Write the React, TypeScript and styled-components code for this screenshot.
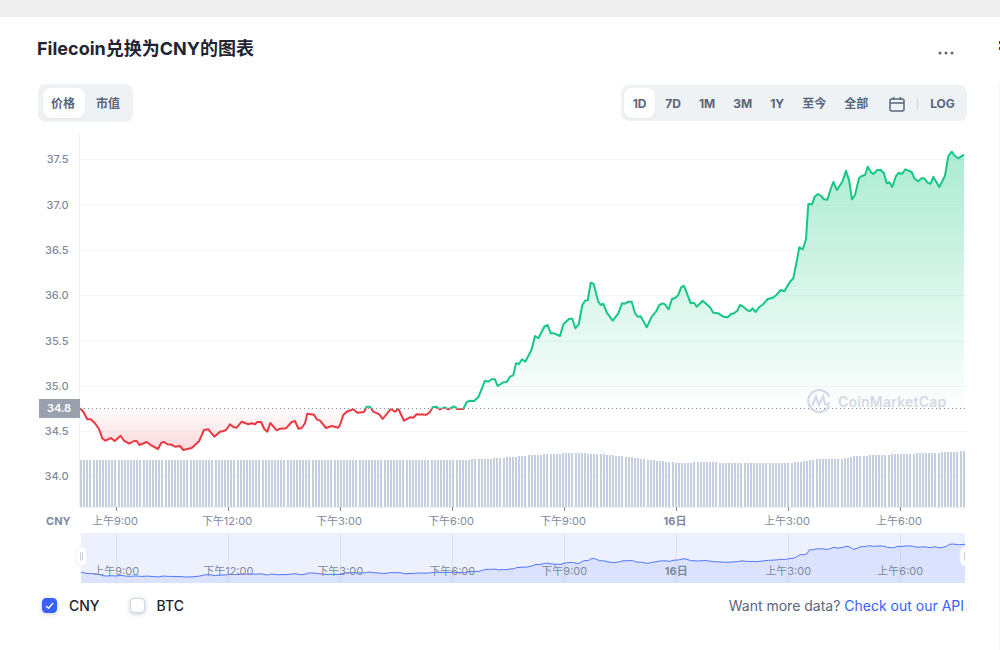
import React from "react";
import styled, { createGlobalStyle } from "styled-components";

const GlobalStyle = createGlobalStyle`
  html, body { margin: 0; padding: 0; background: #fff; }
  body { font-family: Inter, "Noto Sans CJK SC", "Noto Sans", sans-serif; overflow: hidden; }
`;

const Page = styled.div`
  width: 1000px;
  height: 650px;
  display: flex;
  flex-direction: column;
  overflow: hidden;
`;
const TopBand = styled.div`
  height: 17px;
  flex: none;
  background: #eeeeee;
`;
const Body = styled.div`
  flex: 1;
  display: flex;
  min-height: 0;
`;
const Card = styled.section`
  width: 998px;
  flex: none;
  box-sizing: border-box;
  padding: 0 31px 0 38px;
  display: flex;
  flex-direction: column;
`;
const Side = styled.aside`
  flex: 1;
  display: flex;
  flex-direction: column;
  align-items: flex-end;
  padding-top: 24px;
`;
const SideMark = styled.span`
  width: 1.5px;
  height: 3px;
  margin-bottom: 3px;
  background: #6b3a00;
`;
const SideEdge = styled.span`
  width: 1px;
  flex: 1;
  margin-top: 32px;
  background: #f4f4f4;
`;
const Header = styled.header`
  height: 67px;
  flex: none;
  box-sizing: border-box;
  padding: 21px 13px 0 0;
  display: flex;
  justify-content: space-between;
  align-items: flex-start;
`;
const Title = styled.h2`
  margin: 0 0 0 -1px;
  font-size: 18px;
  line-height: 22px;
  font-weight: 700;
  color: #222531;
`;
const More = styled.svg`
  width: 16px;
  height: 4px;
  margin-top: 13px;
  fill: #58667e;
`;
const Controls = styled.div`
  height: 38px;
  flex: none;
  display: flex;
  justify-content: space-between;
  align-items: flex-start;
  margin-bottom: 6px;
`;
const Segment = styled.div`
  display: flex;
  align-items: center;
  gap: ${(p: { $gap: number }) => p.$gap}px;
  background: #eff2f5;
  border-radius: 8px;
`;
const LeftSegment = styled(Segment)`
  height: 38px;
  box-sizing: border-box;
  padding: 0 4px 0 5px;
`;
const RightSegment = styled(Segment)`
  width: 346px;
  height: 36px;
  margin-top: 1px;
  box-sizing: border-box;
  padding: 0 0 0 3px;
`;
const Tab = styled.button<{ $active?: boolean; $left?: number; $right?: number; $top?: number }>`
  height: 30px;
  border: 0;
  margin: 0;
  padding: ${(p) => p.$top ?? 1}px ${(p) => p.$right ?? 8}px 0 ${(p) => p.$left ?? 8}px;
  border-radius: 8px;
  background: ${(p) => (p.$active ? "#fff" : "transparent")};
  box-shadow: ${(p) => (p.$active ? "0 1px 2px rgba(128,138,157,.12)" : "none")};
  color: #58667e;
  font-family: inherit;
  font-size: 12px;
  font-weight: 700;
  line-height: 28px;
`;
const CalendarIcon = styled.svg`
  width: 16px;
  height: 16px;
  margin: 1px 0 0 11px;
  fill: none;
  stroke: #58667e;
  stroke-width: 1.5;
`;
const Divider = styled.span`
  width: 1px;
  height: 14px;
  margin: 1px 10px 0 10px;
  background: #cfd6e4;
`;
const LogLabel = styled.span`
  margin-top: 1px;
  color: #58667e;
  font-size: 12px;
  font-weight: 700;
`;
const ChartSvg = styled.svg`
  width: 929px;
  height: 462px;
  flex: none;
  display: block;
`;
const AxisText = styled.text<{ $bold?: boolean }>`
  font-family: Inter, "Noto Sans CJK SC", sans-serif;
  font-size: 11px;
  font-weight: ${(p) => (p.$bold ? 700 : 400)};
  fill: #808a9d;
`;
const PriceText = styled.text`
  font-family: Inter, sans-serif;
  font-size: 11px;
  font-weight: 500;
  fill: #808a9d;
`;
const BadgeText = styled.text`
  font-family: Inter, sans-serif;
  font-size: 11px;
  font-weight: 600;
  fill: #fff;
`;
const Watermark = styled.text`
  font-family: Inter, sans-serif;
  font-size: 14px;
  font-weight: 600;
  letter-spacing: 0.2px;
  fill: #d3d9e6;
`;
const Footer = styled.footer`
  display: flex;
  align-items: center;
  justify-content: space-between;
  height: 30px;
  padding: 0 3px 0 4px;
  font-size: 14px;
`;
const Legend = styled.div`
  display: flex;
  align-items: center;
  gap: 30px;
`;
const LegendItem = styled.label`
  display: flex;
  align-items: center;
  gap: 12px;
  font-weight: 500;
  color: #222531;
`;
const Check = styled.span<{ $on?: boolean }>`
  width: 15px;
  height: 15px;
  box-sizing: border-box;
  border-radius: 4px;
  display: flex;
  align-items: center;
  justify-content: center;
  background: ${(p) => (p.$on ? "#3861fb" : "#fff")};
  border: 1px solid ${(p) => (p.$on ? "#3861fb" : "#cfd6e4")};
  box-shadow: 0 1px 4px rgba(128, 138, 157, 0.45);
`;
const CheckMark = styled.svg`
  width: 11px;
  height: 11px;
  fill: none;
  stroke: #fff;
  stroke-width: 1.4;
`;
const ApiNote = styled.p`
  margin: 0;
  color: #58667e;
`;
const ApiLink = styled.a`
  color: #3861fb;
  text-decoration: none;
`;

const LINE: [number, number][] = [
  [80,408.3],[83.3,411.7],[87.3,419.3],[90.7,419.3],[95,423.3],[99,429],[102.3,438.3],[105.3,440.7],[111,438],[114.7,441],[120.7,435.7],[124,440.7],[129.3,443.7],[134,441],[136.7,441],[139.3,445],[146.7,442],[151.7,445.7],[158,449],[161.3,442.7],[164,442],[167.3,444.3],[171.3,444.7],[175,446.7],[180,446],[183.3,450],[191.7,448],[199,441.3],[204,430],[208.3,429.3],[214.3,436.7],[220,431.7],[224,431],[226.7,429.3],[230,424.3],[233.3,427],[236.7,427.7],[241.7,421.7],[248.3,424.3],[251.7,423.3],[255,424.3],[257.3,422],[261,422],[264.3,429],[267.3,431.7],[270.3,423],[276.7,430.3],[280,428.7],[286,428.3],[291.7,422],[295,421],[298.3,428.7],[301.7,428],[305,423.3],[307.3,413.7],[314,414.7],[316.7,419.3],[320,420.7],[326,428],[331.7,426],[338.3,427.7],[340,425],[343.3,415],[346.7,411.7],[353.3,409.3],[357.3,412.7],[364,412],[366.7,406.7],[370,406.7],[373.3,411.7],[379.3,414.3],[382.7,419],[390.7,409],[395,411.7],[398.3,408.7],[404,420.7],[410,417.3],[413.3,417.7],[416.7,414.3],[426.7,414.7],[430,411.7],[432.7,407.3],[436,406.7],[440,409.3],[444.7,407.3],[448.3,409.3],[454,406.3],[457.3,409],[463.3,409],[466.7,402],[470,400.7],[474,401],[478.3,397.3],[485,380.7],[488.3,381.7],[491.7,379.3],[495,379.3],[497.7,386],[503.3,382.3],[506.7,382],[510,376.7],[513.3,375.3],[516,363.3],[519,364],[522,359.3],[525.3,361.7],[531.7,349.3],[535,336],[538.3,338.3],[544.3,326.7],[547.7,325],[550.7,333.3],[554,333.3],[560,336],[563.3,324.3],[569.3,318.7],[572.3,318.7],[575.3,328.3],[578.7,324.3],[582.3,305],[585,300.7],[587.7,300.3],[590.7,282.7],[593.7,284],[598.3,301.7],[600.7,305],[603.3,303.7],[606.7,312.3],[612.7,320.7],[618.3,313.3],[622,303.3],[625,303.7],[628.3,301.7],[631.7,301.7],[635,313.3],[637.7,316.7],[640.7,316.3],[646.7,327.3],[651.7,316.7],[656,311.7],[659.3,305],[662.7,303.3],[665,304.3],[668.7,309.3],[672,299],[675.3,297.7],[678.3,295],[681,287.7],[684,285.7],[690.7,303.3],[694,302.7],[696.7,306.7],[702.7,300.7],[710,307.3],[713.3,312.7],[718.3,313.3],[723.3,316.7],[727.7,317.3],[731,314],[734,313.3],[737.3,310.7],[740,305],[743.3,306.7],[747.3,310.3],[750,311],[752.7,308.3],[755.7,312],[759,307.3],[762.7,304.7],[767.7,299],[772.7,297.7],[776.7,294.7],[780.7,290],[784.3,291.3],[790,281.7],[793.3,278.3],[796,265],[799.3,247.3],[802.7,249.3],[806,239.3],[808.3,204],[812,204.3],[814.7,196.7],[818,194],[821.3,196],[824,199.3],[827.3,199.7],[830.7,189],[833.3,182],[837,190],[842.3,181.7],[846,170.7],[849,180],[852,199.3],[855,195],[859,178.3],[861.7,176],[865,175],[867.7,166.7],[871,172.3],[873.3,174],[877.3,170],[880.7,170],[884,173.3],[886.7,183.3],[889.3,182.3],[892.3,187],[895.7,176.7],[898.7,172.7],[902,174],[905.3,169.3],[911.7,172],[914.3,178.3],[918,181.3],[921.7,178.3],[924.3,178.3],[927.7,182.7],[930.7,183.7],[933.3,176.7],[939.3,187],[945,175.7],[948.3,156],[951.7,151.7],[955,156],[958.3,158.3],[964,154.7],
];

const BAR_KEYS: [number, number][] = [
  [80,460],[180,460],[185,459.5],[300,459.5],[460,460],[500,458],[530,455],[570,453],[600,454],[630,457],[650,460],[680,463],[700,462],[735,463],[790,463],[805,461],[815,459],[840,459],[855,456],[880,455],[900,454],[930,453],[950,452],[965,451],
];

function barTop(x: number): number {
  for (let i = 1; i < BAR_KEYS.length; i++) {
    const [x0, y0] = BAR_KEYS[i - 1];
    const [x1, y1] = BAR_KEYS[i];
    if (x <= x1) return Math.round(y0 + ((y1 - y0) * (x - x0)) / (x1 - x0));
  }
  return 451;
}

const BARS = Array.from({ length: 283 }, (_, i) => Math.round(80 + i * 3.13));
const PRICES: [string, number][] = [["37.5",159.5],["37.0",205],["36.5",250],["36.0",295.5],["35.5",341],["35.0",386.5],["34.5",431.5],["34.0",476.5]];
const TICKS: [string, number, boolean][] = [["上午9:00",116,false],["下午12:00",228,false],["下午3:00",340,false],["下午6:00",452,false],["下午9:00",564,false],["16日",676,true],["上午3:00",788,false],["上午6:00",900,false]];

const BASE = 408.5;
const pts = LINE.map(([x, y]) => `${x},${y}`).join(" ");
const linePath = "M" + pts.replace(/ /g, " L");
const areaPath = `${linePath} L964,${BASE} L80,${BASE} Z`;
const miniPts: [number, number][] = LINE.map(([x, y]) => [x + 1 > 965 ? 965 : x + 1, 544 + ((y - 152) * 33) / 298]);
const miniLine = "M" + miniPts.map(([x, y]) => `${x},${y.toFixed(1)}`).join(" L");
const miniArea = `${miniLine} L965,583 L81,583 Z`;

const TABS: [string, boolean][] = [["1D",true],["7D",false],["1M",false],["3M",false],["1Y",false],["至今",false],["全部",false]];

function Chart() {
  return (
    <ChartSvg viewBox="38 128 929 462">
      <defs>
        <linearGradient id="up" gradientUnits="userSpaceOnUse" x1="0" y1="150" x2="0" y2="408">
          <stop offset="0" stopColor="#16c784" stopOpacity="0.36" />
          <stop offset="1" stopColor="#16c784" stopOpacity="0.01" />
        </linearGradient>
        <linearGradient id="down" gradientUnits="userSpaceOnUse" x1="0" y1="409" x2="0" y2="450">
          <stop offset="0" stopColor="#ea3943" stopOpacity="0.01" />
          <stop offset="1" stopColor="#ea3943" stopOpacity="0.2" />
        </linearGradient>
        <clipPath id="above"><rect x="78" y="130" width="890" height={BASE - 130} /></clipPath>
        <clipPath id="below"><rect x="78" y={BASE} width="890" height="60" /></clipPath>
        <clipPath id="nav"><rect x="70" y="533" width="896" height="50" /></clipPath>
      </defs>

      {PRICES.map(([label, y]) => (
        <g key={label}>
          <line x1="80" x2="967" y1={y} y2={y} stroke="#f3f4f7" />
          <PriceText x="68.5" y={y + 3.5} textAnchor="end">{label}</PriceText>
        </g>
      ))}
      <line x1="79.5" x2="79.5" y1="133" y2="507" stroke="#eff2f5" />

      {BARS.map((x) => {
        const top = barTop(x);
        return <rect key={x} x={x} y={top} width="2" height={507 - top} fill="#a8b5cf" fillOpacity="0.65" />;
      })}
      <line x1="80" x2="967" y1="507.5" y2="507.5" stroke="#eff2f5" />

      <path d={areaPath} fill="url(#up)" clipPath="url(#above)" />
      <path d={areaPath} fill="url(#down)" clipPath="url(#below)" />
      <line x1="80" x2="967" y1={BASE} y2={BASE} stroke="#808a9d" strokeDasharray="1 3" />

      <path d="M829.3 396.5 A11 11 0 1 0 829.3 405.5" fill="none" stroke="#d3d9e6" strokeWidth="2.2" />
      <path d="M812 406 L816 396.5 L819 405 L823 396.5 L825.5 404.5 L830 403" fill="none" stroke="#d3d9e6" strokeWidth="2.2" />
      <Watermark x="838" y="407">CoinMarketCap</Watermark>

      <path d={linePath} fill="none" stroke="#16c784" strokeWidth="2" strokeLinejoin="round" clipPath="url(#above)" />
      <path d={linePath} fill="none" stroke="#ea3943" strokeWidth="2" strokeLinejoin="round" clipPath="url(#below)" />

      <rect x="39" y="399" width="41" height="19" fill="#9aa1ae" />
      <BadgeText x="59" y="412" textAnchor="middle">34.8</BadgeText>

      <AxisText $bold x="46" y="525">CNY</AxisText>
      {TICKS.map(([label, x, bold]) => (
        <g key={label}>
          <line x1={x + 0.5} x2={x + 0.5} y1="507" y2="511" stroke="#808a9d" />
          <AxisText $bold={bold} x={x - 1} y="525" textAnchor="middle">{label}</AxisText>
        </g>
      ))}

      <rect x="81" y="533" width="884" height="50" fill="#edf1fd" />
      {TICKS.map(([label, x]) => (
        <line key={label} x1={x + 0.5} x2={x + 0.5} y1="533" y2="583" stroke="#dde3ef" />
      ))}
      <path d={miniArea} fill="#3861fb" fillOpacity="0.1" />
      <path d={miniLine} fill="none" stroke="#3861fb" strokeWidth="1" strokeOpacity="0.85" />
      {TICKS.map(([label, x, bold]) => (
        <AxisText key={label} $bold={bold} x={x + 0.3} y="575" textAnchor="middle">{label}</AxisText>
      ))}
      <g clipPath="url(#nav)">
        <rect x="76" y="547" width="11" height="19" rx="5" fill="#fff" stroke="#e6e9f0" strokeWidth="0.75" />
        <path d="M80.5 552.5 V560.5 M82.5 552.5 V560.5" stroke="#c6cfdf" />
        <rect x="960" y="547" width="11" height="19" rx="5" fill="#fff" stroke="#e6e9f0" strokeWidth="0.75" />
        <path d="M964.5 552.5 V560.5 M966.5 552.5 V560.5" stroke="#c6cfdf" />
      </g>
    </ChartSvg>
  );
}

export default function App() {
  return (
    <Page>
      <GlobalStyle />
      <TopBand />
      <Body>
        <Card>
          <Header>
            <Title>Filecoin兑换为CNY的图表</Title>
            <More viewBox="0 0 16 4">
              <circle cx="2" cy="2" r="1.5" />
              <circle cx="8" cy="2" r="1.5" />
              <circle cx="14" cy="2" r="1.5" />
            </More>
          </Header>
          <Controls>
            <LeftSegment $gap={2}>
              <Tab $active $left={8} $right={10} $top={2}>价格</Tab>
              <Tab $left={9} $right={9} $top={2}>市值</Tab>
            </LeftSegment>
            <RightSegment $gap={2}>
              {TABS.map(([label, active]) => (
                <Tab key={label} $active={active} $left={active ? 8.7 : 8} $right={active ? 8.7 : 8}>{label}</Tab>
              ))}
              <CalendarIcon viewBox="0 0 16 16">
                <rect x="1" y="3" width="14" height="12" rx="1.5" />
                <path d="M1 7 H15 M4.5 1 V4 M11.5 1 V4" />
              </CalendarIcon>
              <Divider />
              <LogLabel>LOG</LogLabel>
            </RightSegment>
          </Controls>
          <Chart />
          <Footer>
            <Legend>
              <LegendItem>
                <Check $on>
                  <CheckMark viewBox="0 0 11 11"><path d="M2 6 L4.5 8.2 L9 3" /></CheckMark>
                </Check>
                CNY
              </LegendItem>
              <LegendItem>
                <Check />
                BTC
              </LegendItem>
            </Legend>
            <ApiNote>Want more data? <ApiLink href="#">Check out our API</ApiLink></ApiNote>
          </Footer>
        </Card>
        <Side>
          <SideMark />
          <SideMark />
          <SideEdge />
        </Side>
      </Body>
    </Page>
  );
}
